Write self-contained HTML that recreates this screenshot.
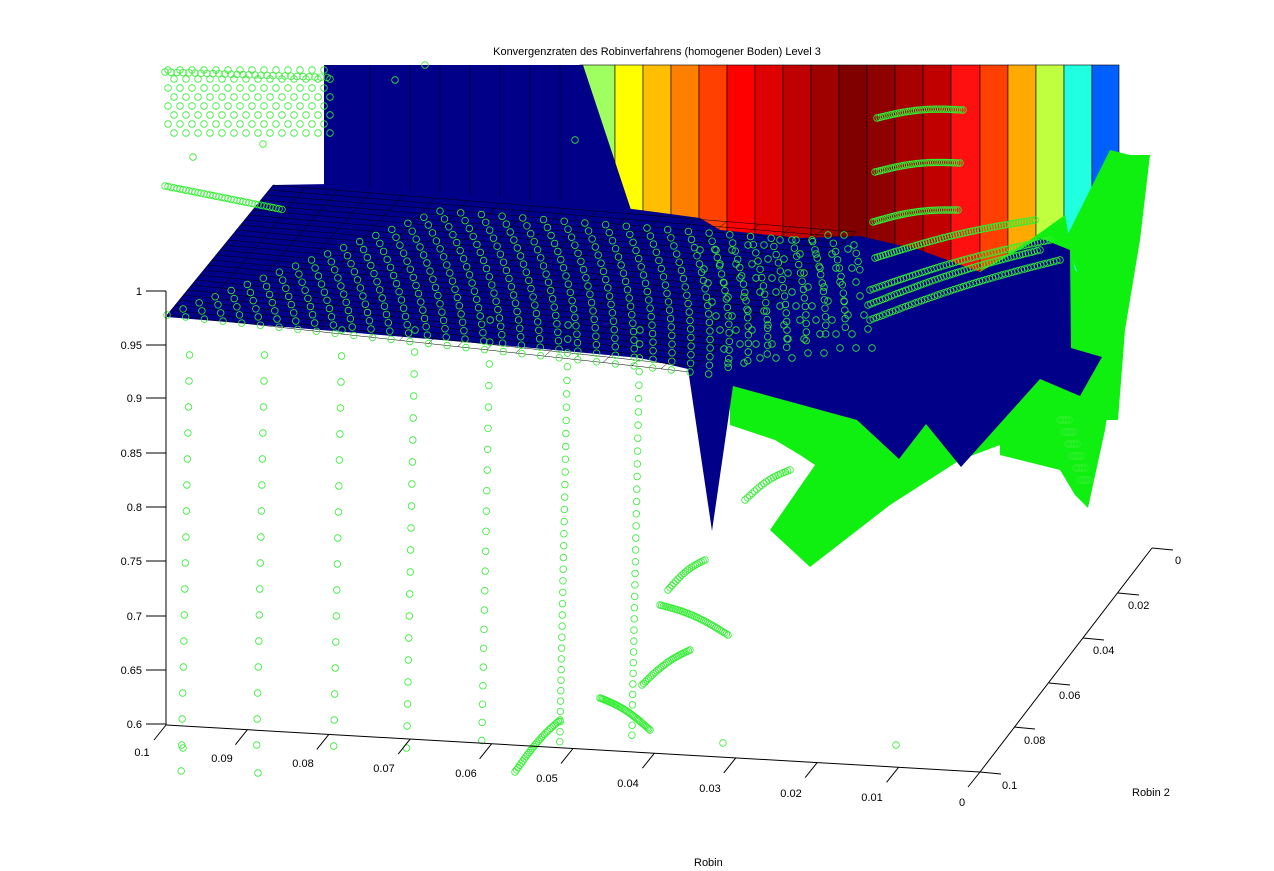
<!DOCTYPE html>
<html><head><meta charset="utf-8"><style>
html,body{margin:0;padding:0;background:#fff;width:1274px;height:871px;overflow:hidden}
svg{display:block}
text{font-family:"Liberation Sans",sans-serif;font-size:11px;fill:#000}
</style></head><body>
<svg id="s" width="1274" height="871" viewBox="0 0 1274 871" xmlns="http://www.w3.org/2000/svg">
<rect width="1274" height="871" fill="#fff"/>
<text x="657" y="55" text-anchor="middle" font-size="10">Konvergenzraten des Robinverfahrens (homogener Boden) Level 3</text>
<g stroke="#000" stroke-width="0.6">
<rect x="580" y="65" width="35" height="240" fill="#9fff60"/>
<rect x="615" y="65" width="28" height="240" fill="#ffff00"/>
<rect x="643" y="65" width="28" height="240" fill="#ffbf00"/>
<rect x="671" y="65" width="28" height="240" fill="#ff8000"/>
<rect x="699" y="65" width="28" height="240" fill="#ff4000"/>
<rect x="727" y="65" width="28" height="240" fill="#ff0000"/>
<rect x="755" y="65" width="28" height="240" fill="#df0000"/>
<rect x="783" y="65" width="28" height="240" fill="#bf0000"/>
<rect x="811" y="65" width="28" height="240" fill="#9f0000"/>
<rect x="839" y="65" width="28" height="240" fill="#800000"/>
<rect x="867" y="65" width="28" height="240" fill="#8f0000"/>
<rect x="895" y="65" width="28" height="240" fill="#a80000"/>
<rect x="923" y="65" width="28" height="240" fill="#c00000"/>
<rect x="951" y="65" width="29" height="240" fill="#ff1010"/>
<rect x="980" y="65" width="28" height="240" fill="#ff4000"/>
<rect x="1008" y="65" width="28" height="240" fill="#ffaa00"/>
<rect x="1036" y="65" width="28" height="240" fill="#c0ff40"/>
<rect x="1064" y="65" width="28" height="260" fill="#20ffe0"/>
<rect x="1092" y="65" width="27" height="230" fill="#0060ff"/>
</g>
<polygon points="324,65 583,65 636,225 324,200" fill="#000088"/>
<g stroke="#000" stroke-width="0.5">
<line x1="370" y1="65" x2="370" y2="200"/><line x1="410" y1="65" x2="410" y2="200"/>
<line x1="440" y1="65" x2="440" y2="200"/><line x1="470" y1="65" x2="470" y2="200"/>
<line x1="500" y1="65" x2="500" y2="200"/><line x1="530" y1="65" x2="530" y2="200"/>
<line x1="560" y1="65" x2="560" y2="200"/>
</g>
<!-- green blob behind surface -->
<polygon fill="#10f010" points="730,378 860,320 950,290 1030,240 1065,215 1075,270 1110,300 1125,300 1105,430 1088,508 1075,495 1060,470 1000,455 1000,445 960,460 890,505 810,567 770,530 815,465 800,455 775,440 730,425"/>
<polygon fill="#10f010" points="1065,240 1110,150 1130,155 1150,155 1140,240 1125,330 1118,420 1105,420 1100,330"/>
<!-- main blue surface -->
<polygon points="167,315 273,185 330,184 600,205 640,210 700,218 720,230 800,238 860,236 920,250 980,272 1040,238 1070,250 1071,348 1102,357 1080,396 1040,379 961,467 926,424 899,459 857,420 733,386 712,531 688,369 640,358 500,345 167,317" fill="#000088"/>
<g id="grid" stroke="#000" stroke-width="0.5" fill="none"></g>
<g id="circ" stroke="#33ee33" stroke-width="0.8" fill="none"></g>
<g stroke="#000" stroke-width="1" fill="none">
<line x1="166" y1="291" x2="166" y2="725"/>
<line x1="146" y1="291" x2="166" y2="291"/><line x1="146" y1="345" x2="166" y2="345"/>
<line x1="146" y1="398" x2="166" y2="398"/><line x1="146" y1="453" x2="166" y2="453"/>
<line x1="146" y1="507" x2="166" y2="507"/><line x1="146" y1="561" x2="166" y2="561"/>
<line x1="146" y1="616" x2="166" y2="616"/><line x1="146" y1="670" x2="166" y2="670"/>
<line x1="146" y1="724" x2="166" y2="724"/>
<line x1="166" y1="725" x2="980" y2="772"/>
<line x1="980" y1="772" x2="1152" y2="548"/><line x1="1152" y1="548" x2="1173" y2="550"/>
<line x1="1118" y1="593" x2="1139" y2="595"/><line x1="1083" y1="638" x2="1104" y2="640"/>
<line x1="1049" y1="683" x2="1070" y2="685"/><line x1="1014" y1="727" x2="1035" y2="729"/>
<line x1="980" y1="772" x2="1001" y2="774"/>
</g>
<g id="xt" stroke="#000" stroke-width="1"></g>
<g text-anchor="end">
<text x="142" y="295">1</text><text x="142" y="349">0.95</text><text x="142" y="402">0.9</text>
<text x="142" y="457">0.85</text><text x="142" y="511">0.8</text><text x="142" y="565">0.75</text>
<text x="142" y="620">0.7</text><text x="142" y="674">0.65</text><text x="142" y="728">0.6</text>
</g>
<g text-anchor="middle">
<text x="142" y="756">0.1</text><text x="222" y="762">0.09</text><text x="303" y="767">0.08</text>
<text x="384" y="772">0.07</text><text x="466" y="777">0.06</text><text x="547" y="782">0.05</text>
<text x="628" y="787">0.04</text><text x="710" y="792">0.03</text><text x="791" y="797">0.02</text>
<text x="872" y="801">0.01</text><text x="962" y="806">0</text>
</g>
<g>
<text x="1175" y="564">0</text><text x="1128" y="609">0.02</text><text x="1093" y="654">0.04</text>
<text x="1059" y="699">0.06</text><text x="1024" y="744">0.08</text><text x="1002" y="789">0.1</text>
<text x="1132" y="796">Robin 2</text><text x="694" y="866">Robin</text>
</g>
</svg>
<script>
var NS="http://www.w3.org/2000/svg";
var C=document.getElementById('circ'),G=document.getElementById('grid'),X=document.getElementById('xt');
function c(x,y){var e=document.createElementNS(NS,'circle');e.setAttribute('cx',x.toFixed(1));e.setAttribute('cy',y.toFixed(1));e.setAttribute('r',3.3);C.appendChild(e);}
function l(p,x1,y1,x2,y2){var e=document.createElementNS(NS,'line');e.setAttribute('x1',x1);e.setAttribute('y1',y1);e.setAttribute('x2',x2);e.setAttribute('y2',y2);p.appendChild(e);}
for(var i=0;i<=10;i++){var x=166+i*81.4,y=725+i*4.7;l(X,x,y,x-12,y+15);}
var A=[167,315],F=[690,372],B=[273,185];
for(var v=0;v<=1.0001;v+=1/26){l(G,A[0]+v*(B[0]-A[0]),A[1]+v*(B[1]-A[1]),F[0]+v*(B[0]-A[0])+v*60,F[1]+v*(B[1]-A[1])-v*10);}
for(var u=0;u<=1.0001;u+=1/18){l(G,A[0]+u*(F[0]-A[0]),A[1]+u*(F[1]-A[1]),B[0]+u*(F[0]-A[0])+u*60,B[1]+u*(F[1]-A[1])-u*10);}
for(var u=0;u<1.05;u+=1/28){for(var v=0;v<1;v+=1/18){var s=u+v*0.35;var x=A[0]+s*(F[0]-A[0])+v*(B[0]-A[0])+v*60*u,y=A[1]+s*(F[1]-A[1])+v*(B[1]-A[1])-v*10*u;if(x<860)c(x,y);}}
for(var i=0;i<10;i++)for(var j=0;j<8;j++){c(700+i*16+j*4,250+j*16-i*2+((i*7+j*3)%5));}
for(var i=0;i<6;i++)for(var j=0;j<4;j++){c(1060+i*4+j*3,420+i*12);}
var cols=[[190,355],[265,355],[342,330],[415,330],[490,320],[568,325],[640,330]];
for(var k=0;k<cols.length;k++){var x0=cols[k][0],y=cols[k][1],step=k<3?26:(k<5?22:14);while(y<775-k*6){c(x0-(y-330)*0.02,y);y+=step-(k>=4?(y-330)*0.01:0);}}
for(var r=0;r<8;r++)for(var q=0;q<14;q++){c(168+q*12+(r%2)*6,70+r*9);}
for(var q=0;q<28;q++)c(165+q*6,72+q*0.2);
for(var q=0;q<40;q++)c(165+q*3,186+q*0.6);
function arc(x1,y1,x2,y2,n){for(var i=0;i<n;i++){var t=i/(n-1);c(x1+(x2-x1)*t,y1+(y2-y1)*t-Math.sin(t*Math.PI)*4);}}
arc(877,118,963,110,40);arc(875,172,960,163,40);arc(873,222,958,210,40);arc(875,258,1035,220,60);arc(870,290,1050,240,60);arc(868,305,1040,250,60);arc(870,320,1060,260,60);
arc(600,698,650,730,40);arc(642,685,690,650,30);arc(660,605,728,635,40);arc(668,590,705,560,20);arc(745,500,790,470,20);arc(515,772,560,720,30);
c(723,743);c(896,745);c(183,748);c(258,773);c(193,157);c(263,144);c(395,80);c(425,65);c(575,140);
</script>
</body></html>
